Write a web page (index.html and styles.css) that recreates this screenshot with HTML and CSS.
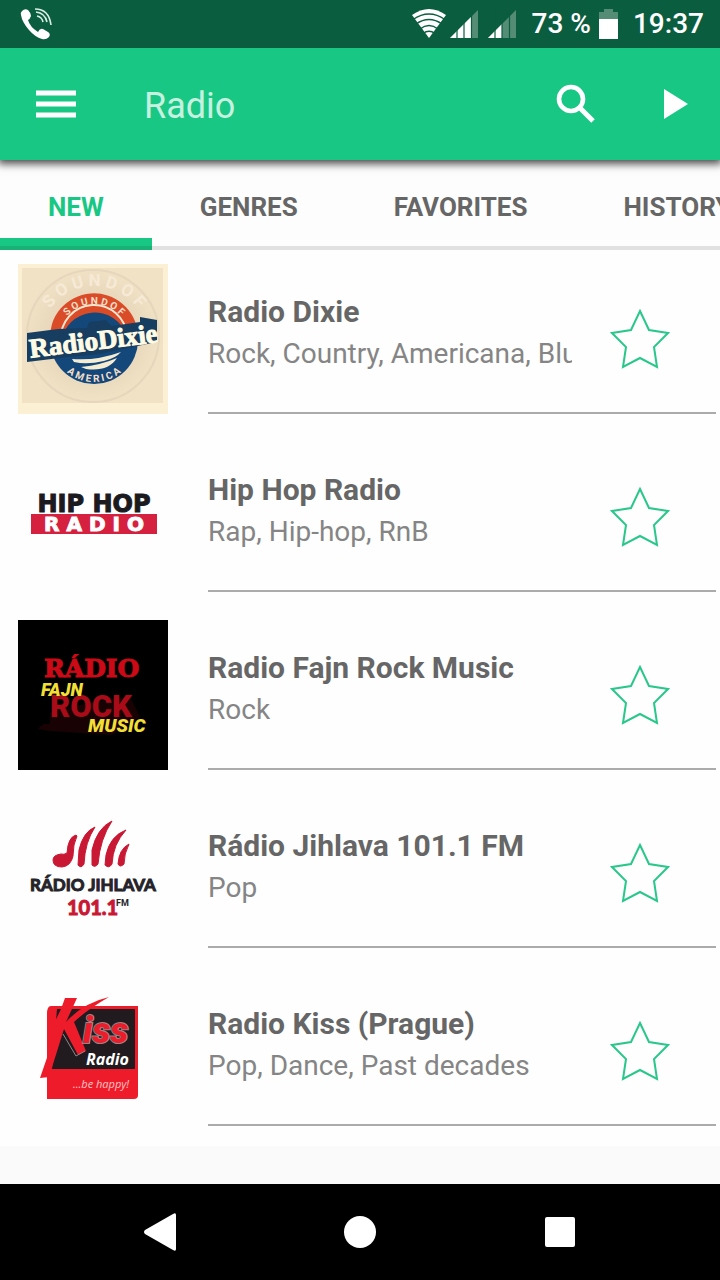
FILE: index.html
```html
<!DOCTYPE html>
<html lang="en">
<head>
    <meta charset="UTF-8">
    <meta name="viewport" content="width=device-width, initial-scale=1.0">
    <title>Radio</title>
    <link rel="stylesheet" href="styles.css">
</head>
<body>
    <div class="status-bar">
        <svg class="call-icon" width="32" height="32" viewBox="0 0 32 32">
            <path d="M2 3 Q5 0 8 2 Q11 5 11 8 Q10 11 8 12 Q10 19 18 24 Q20 20 23 21 L28 24 Q31 26 29 29 Q26 32 22 31 Q15 29 9 22 Q2 14 1 7 Q0 5 2 3Z" fill="#fff"/>
            <path d="M17 8 Q22 9 23 14 M16 4 Q25 5 27 14 M15 1 Q29 1 31 17" fill="none" stroke="#d8eee4" stroke-width="1.6"/>
        </svg>
        <div class="status-info">
            <svg width="34" height="30" viewBox="0 0 34 30">
                <path d="M0 6 Q17 -6 34 6 L17 29Z" fill="#fff"/>
                <path d="M1 10.5 Q17 -.5 33 10.5 M4 15 Q17 6 30 15 M8 20 Q17 13 26 20 M11 24.5 Q17 20 23 24.5" fill="none" stroke="#0b5d3f" stroke-width="1.4"/>
            </svg>
            <svg class="signal" width="28" height="28" viewBox="0 0 28 28">
                <path d="M0 28 L28 0 V28Z" fill="#548c76"/>
                <path d="M0 28 L21 7 V28Z" fill="#fff"/>
                <path d="M7 0V28M14 0V28M21.5 0V28" stroke="#0b5d3f" stroke-width="1.2"/>
            </svg>
            <svg class="signal-second" width="28" height="28" viewBox="0 0 28 28">
                <path d="M0 28 L28 0 V28Z" fill="#548c76"/>
                <path d="M0 28 L14 14 V28Z" fill="#fff"/>
                <path d="M7 0V28M14 0V28M21.5 0V28" stroke="#0b5d3f" stroke-width="1.2"/>
            </svg>
            <span class="battery-level">73 %</span>
            <svg width="20" height="30" viewBox="0 0 20 30">
                <path d="M0 3H5V0H14V3H19V10H0Z" fill="#548c76"/>
                <path d="M0 10H19V30H0Z" fill="#fff"/>
            </svg>
            <span class="clock">19:37</span>
        </div>
    </div>

    <header class="app-bar">
        <button class="icon-btn" aria-label="Menu">
            <svg width="40" height="28" viewBox="0 0 40 28"><path d="M0 3H40M0 14H40M0 25H40" stroke="#fff" stroke-width="5"/></svg>
        </button>
        <h1>Radio</h1>
        <button class="icon-btn" aria-label="Search">
            <svg width="40" height="40" viewBox="0 0 40 40">
                <circle cx="15" cy="15" r="12" fill="none" stroke="#fff" stroke-width="4.6"/>
                <path d="M24 24L37 37" stroke="#fff" stroke-width="5"/>
            </svg>
        </button>
        <button class="icon-btn play-btn" aria-label="Play">
            <svg width="24" height="30" viewBox="0 0 24 30"><path d="M0 0L24 15L0 30Z" fill="#fff"/></svg>
        </button>
    </header>

    <nav class="tabs">
        <a class="active" href="#new">NEW</a>
        <a href="#genres">GENRES</a>
        <a href="#favorites">FAVORITES</a>
        <a href="#history">HISTORY</a>
    </nav>

    <main class="stations">
        <article class="station">
            <svg class="logo" viewBox="0 0 150 150">
                <defs>
                    <path id="dixie-outer" d="M22 76 A54 54 0 0 1 130 76"/>
                    <path id="dixie-top" d="M40 76 A36 36 0 0 1 112 76"/>
                    <path id="dixie-bottom" d="M34 76 A42 42 0 0 0 118 76"/>
                    <radialGradient id="paper"><stop offset="0" stop-color="#dcc8aa"/><stop offset="1" stop-color="#f1e2c6"/></radialGradient>
                </defs>
                <rect width="150" height="150" fill="#fcf0d4"/>
                <rect x="4" y="4" width="141" height="135" fill="url(#paper)"/>
                <circle cx="75" cy="72" r="66" fill="none" stroke="#e6d6bb" stroke-width="2"/>
                <text class="dixie-back"><textPath href="#dixie-outer" startOffset="50%" text-anchor="middle">S O U N D  O F</textPath></text>
                <circle cx="76" cy="76" r="44" fill="#14477a"/>
                <path d="M32 77 A44 44 0 0 1 120 70 L109 72 A34 34 0 0 0 43 78Z" fill="#da4c28"/>
                <path d="M43 76 A33 33 0 0 1 109 72" fill="none" stroke="#f7e7d0" stroke-width="2"/>
                <text class="dixie-small"><textPath href="#dixie-top" startOffset="50%" text-anchor="middle">S O U N D  O F</textPath></text>
                <path d="M9 69L40 65L69 64L71 58L88 56L94 62L122 58V53L139 56V78L100 86L82 90L50 93L9 98Z" fill="#173e60"/>
                <text class="dixie-name" x="11" y="86" transform="rotate(-7 75 78)">RadioDixie</text>
                <path d="M54 95Q78 97 103 88Q98 94 86 97Q69 101 56 98ZM63 103Q83 101 99 94Q90 108 68 105Z" fill="#f5ecd2"/>
                <text class="dixie-small"><textPath href="#dixie-bottom" startOffset="50%" text-anchor="middle">A M E R I C A</textPath></text>
            </svg>
            <div class="station-body">
                <div class="station-text"><h2>Radio Dixie</h2><p>Rock, Country, Americana, Blues</p></div>
                <button class="star" aria-label="Add Radio Dixie to favorites"><svg viewBox="0 0 60 60"><path d="M30 2L39 21L58 24L44 38L47 58L30 49L13 58L16 38L2 24L21 21Z"/></svg></button>
            </div>
        </article>

        <article class="station">
            <svg class="logo" viewBox="0 0 150 150">
                <text class="hiphop" x="76" y="70" text-anchor="middle">HIP HOP</text>
                <rect x="13" y="72" width="126" height="20" fill="#d5213f"/>
                <text class="hiphop-radio" x="76" y="89" text-anchor="middle">R A D I O</text>
            </svg>
            <div class="station-body">
                <div class="station-text"><h2>Hip Hop Radio</h2><p>Rap, Hip-hop, RnB</p></div>
                <button class="star" aria-label="Add Hip Hop Radio to favorites"><svg viewBox="0 0 60 60"><path d="M30 2L39 21L58 24L44 38L47 58L30 49L13 58L16 38L2 24L21 21Z"/></svg></button>
            </div>
        </article>

        <article class="station">
            <svg class="logo" viewBox="0 0 150 150">
                <rect width="150" height="150"/>
                <path d="M20 109Q24 103 32 104L32 93Q58 84 112 77L122 97L94 115L32 111Z" fill="#190204"/>
                <text class="fajn-radio" x="26" y="57">RÁDIO</text>
                <text class="fajn-rock" x="32" y="97">ROCK</text>
                <text class="fajn-yellow" x="23" y="76">FAJN</text>
                <text class="fajn-yellow fajn-music" x="70" y="112">MUSIC</text>
            </svg>
            <div class="station-body">
                <div class="station-text"><h2>Radio Fajn Rock Music</h2><p>Rock</p></div>
                <button class="star" aria-label="Add Radio Fajn Rock Music to favorites"><svg viewBox="0 0 60 60"><path d="M30 2L39 21L58 24L44 38L47 58L30 49L13 58L16 38L2 24L21 21Z"/></svg></button>
            </div>
        </article>

        <article class="station">
            <svg class="logo" viewBox="0 0 150 150">
                <g fill="#c91834" stroke="#c91834" stroke-linejoin="round">
                    <path d="M58 37Q50 39 49 55Q46 57 43 56Q35 57 35 62Q35 69 44 69Q53 68 55 58Q55 46 59 38Z"/>
                    <path d="M77 29Q65 34 61 52L60 67Q63 71 66 66Q67 44 77 29Z"/>
                    <path d="M94 23Q79 30 74 52L74 67Q77 70 80 66Q82 41 94 23Z"/>
                    <path d="M108 32Q92 38 88 57L87 67Q91 71 94 66Q95 46 108 32Z"/>
                    <path d="M111 46Q101 51 100 66Q102 70 106 66Q106 56 111 46Z"/>
                </g>
                <text class="jihlava-name" x="75" y="93" text-anchor="middle">RÁDIO JIHLAVA</text>
                <text class="jihlava-number" x="49" y="117">101.1</text>
                <text class="jihlava-fm" x="98" y="108">FM</text>
            </svg>
            <div class="station-body">
                <div class="station-text"><h2>Rádio Jihlava 101.1 FM</h2><p>Pop</p></div>
                <button class="star" aria-label="Add Rádio Jihlava 101.1 FM to favorites"><svg viewBox="0 0 60 60"><path d="M30 2L39 21L58 24L44 38L47 58L30 49L13 58L16 38L2 24L21 21Z"/></svg></button>
            </div>
        </article>

        <article class="station">
            <svg class="logo" viewBox="0 0 150 150">
                <path d="M33 30H120V119Q120 123 116 123H29V38Q29 30 33 30Z" fill="#ee1c2a"/>
                <path d="M39 33H117V93H34Z" fill="#211a1e"/>
                <path d="M47 22H59L48 46Q65 27 91 21Q70 33 56 46L68 75L60 79L46 53L31 101L22 102L32 73L30 60L43 33Z" fill="#ee1c2a"/>
                <path d="M45 58L58 80L67 75" fill="none" stroke="#8f898b" stroke-width="1"/>
                <text class="kiss-name" x="65" y="67">iss</text>
                <text class="kiss-radio" x="68" y="89">Radio</text>
                <text class="kiss-slogan" x="55" y="112">...be happy!</text>
            </svg>
            <div class="station-body">
                <div class="station-text"><h2>Radio Kiss (Prague)</h2><p>Pop, Dance, Past decades</p></div>
                <button class="star" aria-label="Add Radio Kiss to favorites"><svg viewBox="0 0 60 60"><path d="M30 2L39 21L58 24L44 38L47 58L30 49L13 58L16 38L2 24L21 21Z"/></svg></button>
            </div>
        </article>
    </main>

    <footer class="system-nav">
        <button aria-label="Back"><svg width="32" height="38" viewBox="0 0 32 38"><path d="M29 1Q32 -1 32 2V36Q32 39 29 37L1 21Q-1 19 1 17Z" fill="#fff"/></svg></button>
        <button aria-label="Home"><svg width="32" height="32" viewBox="0 0 32 32"><circle cx="16" cy="16" r="16" fill="#fff"/></svg></button>
        <button aria-label="Recent apps"><svg width="30" height="30" viewBox="0 0 30 30"><rect width="30" height="30" rx="2" fill="#fff"/></svg></button>
    </footer>
</body>
</html>
```
FILE: styles.css
```css
* {
    box-sizing: border-box;
}

body {
    display: flex;
    flex-direction: column;
    min-height: 100vh;
    margin: 0;
    background-color: #fafafa;
    font-family: Roboto, sans-serif;
    overflow-x: hidden;
}

h1, h2, p {
    margin: 0;
}

svg {
    display: block;
    flex-shrink: 0;
}

button {
    display: flex;
    align-items: center;
    justify-content: center;
    padding: 0;
    border: none;
    background: none;
    cursor: pointer;
}

/* Status bar */
.status-bar {
    position: relative;
    z-index: 2;
    display: flex;
    align-items: center;
    justify-content: space-between;
    height: 48px;
    padding: 0 16px 0 20px;
    background-color: #0b5d3f;
    color: #fff;
    font-size: 28px;
    font-weight: 500;
    line-height: 50px;
}

.status-info {
    display: flex;
    align-items: center;
}

.signal {
    margin-left: 4px;
}

.signal-second {
    margin-left: 10px;
}

.battery-level {
    margin: 0 8px 0 16px;
}

.clock {
    margin-left: 14px;
}

/* App bar */
.app-bar {
    position: relative;
    z-index: 1;
    display: flex;
    align-items: center;
    height: 112px;
    padding: 0 4px 0 16px;
    background-color: #19c784;
    box-shadow: 0 2px 8px 2px rgba(0, 0, 0, 0.7);
}

.app-bar h1 {
    flex: 1;
    margin-left: 48px;
    padding-top: 4px;
    color: #c6f1e0;
    font-size: 36px;
    font-weight: 400;
}

.icon-btn {
    width: 80px;
    height: 80px;
}

.play-btn {
    margin-left: 20px;
}

/* Tabs */
.tabs {
    display: flex;
    flex-shrink: 0;
    height: 90px;
    background-color: #fdfdfd;
    box-shadow: inset 0 -4px #e1e1e1;
    overflow: hidden;
}

.tabs a {
    flex-shrink: 0;
    padding: 0 48px;
    color: #666;
    font-size: 26px;
    font-weight: 700;
    line-height: 94px;
    text-decoration: none;
}

.tabs .active {
    height: 90px;
    color: #19c784;
    box-shadow: inset 0 -4px #18b277, inset 0 -12px #19c784;
}

/* Station list */
.stations {
    padding-top: 6px;
    background-color: #fefefe;
}

.station {
    display: flex;
    gap: 40px;
    padding: 8px 4px 20px 18px;
}

.logo {
    width: 150px;
    height: 150px;
}

.station-body {
    display: flex;
    flex: 1;
    min-width: 0;
    align-items: center;
    padding-top: 2px;
    border-bottom: 2px solid #ababab;
}

.station-text {
    flex: 1;
    min-width: 0;
    padding-bottom: 12px;
}

.station-text h2,
.station-text p {
    overflow: hidden;
    white-space: nowrap;
}

.station-text h2 {
    color: #666;
    font-size: 30px;
    font-weight: 700;
    line-height: 42px;
}

.station-text p {
    color: #858585;
    font-size: 28px;
    line-height: 42px;
}

.star {
    width: 60px;
    height: 60px;
    margin: 0 46px 0 38px;
}

.star svg {
    width: 60px;
    height: 60px;
    fill: none;
    stroke: #2ac78b;
    stroke-width: 2;
}

/* Logo lettering */
.dixie-back {
    fill: #f6ead6;
    font-size: 17px;
    font-weight: 700;
}

.dixie-small {
    fill: #f4dfc8;
    font-size: 10px;
    font-weight: 700;
}

.dixie-name {
    fill: #fffbe5;
    stroke: #fffbe5;
    font-family: "Liberation Serif", serif;
    font-size: 27px;
    font-weight: 700;
}

.hiphop {
    fill: #1b1b1f;
    stroke: #1b1b1f;
    font-family: "DejaVu Sans", sans-serif;
    font-size: 24px;
    font-weight: 700;
}

.hiphop-radio {
    fill: #fff;
    stroke: #fff;
    font-family: "DejaVu Sans", sans-serif;
    font-size: 20px;
    font-weight: 700;
}

.fajn-radio {
    fill: #cc0a17;
    stroke: #cc0a17;
    font-family: "DejaVu Serif", serif;
    font-size: 25px;
    font-weight: 700;
}

.fajn-rock {
    fill: #a90c18;
    font-size: 31px;
    font-weight: 900;
}

.fajn-yellow {
    fill: #f1df35;
    font-size: 18px;
    font-style: italic;
    font-weight: 900;
}

.fajn-music {
    font-size: 19px;
}

.jihlava-name {
    fill: #252329;
    stroke: #252329;
    font-family: Lato, sans-serif;
    font-size: 17px;
    font-weight: 700;
}

.jihlava-number {
    fill: #c91834;
    stroke: #c91834;
    font-family: Lato, sans-serif;
    font-size: 20px;
    font-weight: 700;
}

.jihlava-fm {
    fill: #252329;
    font-size: 9px;
    font-weight: 700;
}

.kiss-name {
    fill: #ee1c2a;
    stroke: #8f898b;
    stroke-width: 2px;
    paint-order: stroke;
    font-size: 36px;
    font-style: italic;
    font-weight: 900;
}

.kiss-radio {
    fill: #fff;
    font-family: "Open Sans", sans-serif;
    font-size: 16px;
    font-style: italic;
    font-weight: 700;
}

.kiss-slogan {
    fill: #ffc4c4;
    font-family: "Open Sans", sans-serif;
    font-size: 11px;
    font-style: italic;
}

/* System navigation */
.system-nav {
    display: grid;
    grid-template-columns: repeat(3, 1fr);
    height: 96px;
    margin-top: auto;
    padding: 0 60px;
    background-color: #000;
}
```
